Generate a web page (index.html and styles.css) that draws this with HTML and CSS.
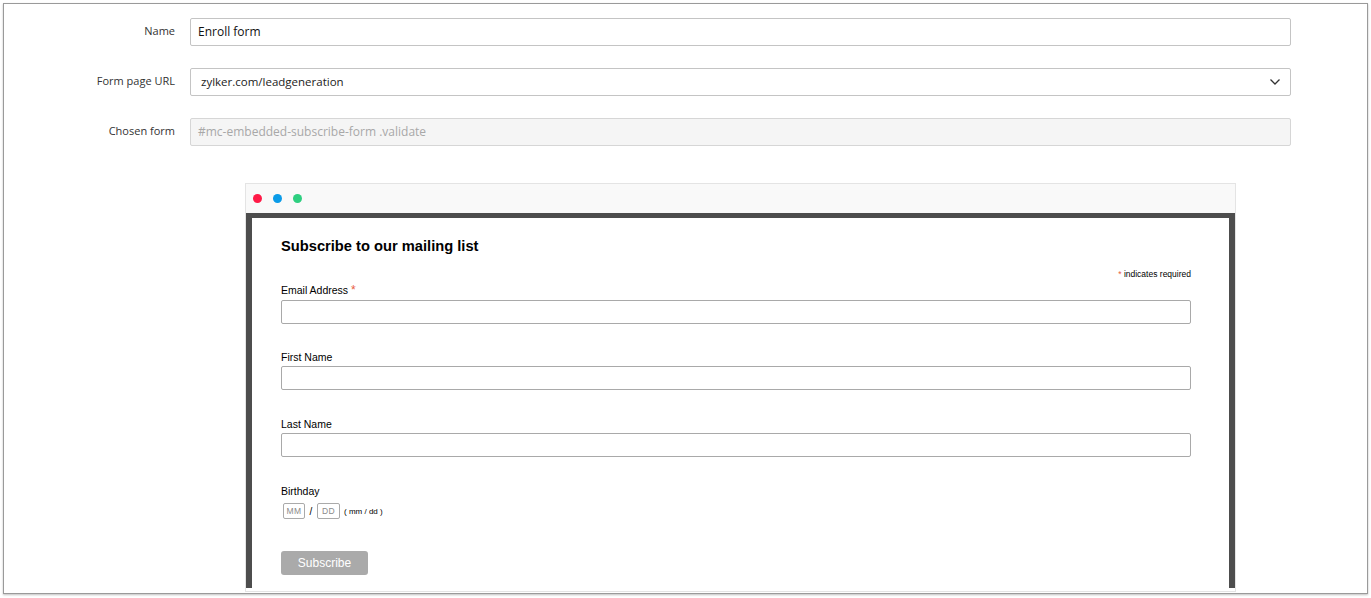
FILE: index.html
```html
<!DOCTYPE html>
<html>
<head>
<meta charset="utf-8">
<link rel="stylesheet" href="styles.css">
</head>
<body>
<div class="frame">
  <div class="settings">
    <div class="row">
      <label class="row-label">Name</label>
      <div class="field">Enroll form</div>
    </div>
    <div class="row">
      <label class="row-label">Form page URL</label>
      <div class="field select">
        <span class="select-value">zylker.com/leadgeneration</span>
        <svg class="chev" width="12" height="8" viewBox="0 0 12 8"><path d="M1.5 1.5 L6 6 L10.5 1.5" fill="none" stroke="#333" stroke-width="1.3"/></svg>
      </div>
    </div>
    <div class="row">
      <label class="row-label">Chosen form</label>
      <div class="field disabled">#mc-embedded-subscribe-form .validate</div>
    </div>
  </div>

  <div class="window">
    <div class="titlebar">
      <span class="dot red"></span>
      <span class="dot blue"></span>
      <span class="dot green"></span>
    </div>
    <div class="viewport">
      <div class="mc">
        <h2 class="mc-title">Subscribe to our mailing list</h2>
        <div class="mc-required"><span class="ast">*</span> indicates required</div>
        <div class="mc-group g1">
          <div class="mc-label">Email Address <span class="ast big">*</span></div>
          <div class="mc-input"></div>
        </div>
        <div class="mc-group g2">
          <div class="mc-label">First Name</div>
          <div class="mc-input"></div>
        </div>
        <div class="mc-group g3">
          <div class="mc-label">Last Name</div>
          <div class="mc-input"></div>
        </div>
        <div class="mc-group g4">
          <div class="mc-label">Birthday</div>
          <div class="mc-date">
            <span class="datebox mm">MM</span>
            <span class="slash">/</span>
            <span class="datebox dd">DD</span>
            <span class="datehint">( mm / dd )</span>
          </div>
        </div>
        <div class="mc-button">Subscribe</div>
      </div>
    </div>
  </div>
</div>
</body>
</html>
```

FILE: styles.css
```css
* { box-sizing: border-box; }
html, body { margin: 0; padding: 0; background: #ffffff; }
body { width: 1371px; height: 598px; overflow: hidden; padding: 3px 0 0 3px; }

.frame {
  width: 1365px;
  height: 591px;
  border: 1px solid #9a9a9a;
  box-shadow: 0 1px 2px rgba(0,0,0,0.25);
  background: #fff;
  overflow: hidden;
  padding-top: 14px;
}

.settings { display: flex; flex-direction: column; gap: 22px; }
.row { display: flex; align-items: center; }
.row-label {
  width: 171px;
  margin-right: 15px;
  text-align: right;
  font-family: "Open Sans", sans-serif;
  font-size: 11px;
  line-height: 14px;
  padding-bottom: 2px;
  color: #333;
}
.field {
  width: 1101px;
  height: 28px;
  border: 1px solid #c4c4c4;
  border-radius: 2px;
  padding: 0 7px 2px;
  display: flex;
  align-items: center;
  font-family: "Open Sans", sans-serif;
  font-size: 12px;
  color: #111;
}
.select { justify-content: space-between; padding: 0 9px 1px 10px; font-size: 11.5px; color: #222; }
.chev { display: block; }
.disabled { background: #f5f5f5; color: #a8a8a8; border-color: #d6d6d6; }

.window {
  margin: 37px 0 0 241px;
  width: 991px;
  height: 409px;
  border: 1px solid #e4e4e4;
  display: flex;
  flex-direction: column;
}
.titlebar {
  height: 29px;
  background: #f9f9f9;
  display: flex;
  align-items: center;
  gap: 11px;
  padding-left: 7px;
}
.dot { width: 9px; height: 9px; border-radius: 50%; display: block; }
.red { background: #ff1a47; }
.blue { background: #0a9be8; }
.green { background: #2ecf80; }

.viewport {
  height: 375px;
  border: 6px solid #4d4d4d;
  border-top-width: 5px;
  border-bottom: 0;
  background: #fff;
}
.mc {
  padding: 19px 38px 0 29px;
  font-family: "Liberation Sans", Arial, sans-serif;
  color: #000;
}
.mc-title {
  margin: 0;
  font-size: 14.7px;
  line-height: 18px;
  font-weight: bold;
}
.mc-required {
  margin-top: 14px;
  text-align: right;
  font-size: 8.5px;
  line-height: 10px;
}
.ast { color: #e85c41; }
.ast.big { font-size: 12px; }
.mc-group { display: flex; flex-direction: column; }
.g1 { margin-top: 5px; }
.g1 .mc-label { margin-bottom: 3px; }
.g2 { margin-top: 27px; }
.g3 { margin-top: 28px; }
.g4 { margin-top: 28px; }
.mc-label { font-size: 10.5px; line-height: 13px; margin-bottom: 2px; }
.mc-input {
  height: 24px;
  border: 1px solid #a9a9a9;
  border-radius: 2px;
}
.mc-date { display: flex; align-items: center; margin-top: 3px; padding-left: 2px; }
.datebox {
  height: 16px;
  border: 1px solid #aaa;
  border-radius: 2px;
  font-size: 8.5px;
  color: #8a8a8a;
  display: flex;
  align-items: center;
  justify-content: center;
  letter-spacing: 0.3px;
}
.mm { width: 22px; }
.dd { width: 23px; }
.slash { font-size: 10px; width: 12px; text-align: center; }
.datehint { font-size: 8px; margin-left: 4px; }
.mc-button {
  margin-top: 32px;
  width: 87px;
  height: 24px;
  border-radius: 3px;
  background: #aaaaaa;
  color: #fff;
  font-size: 12px;
  display: flex;
  align-items: center;
  justify-content: center;
}
```
